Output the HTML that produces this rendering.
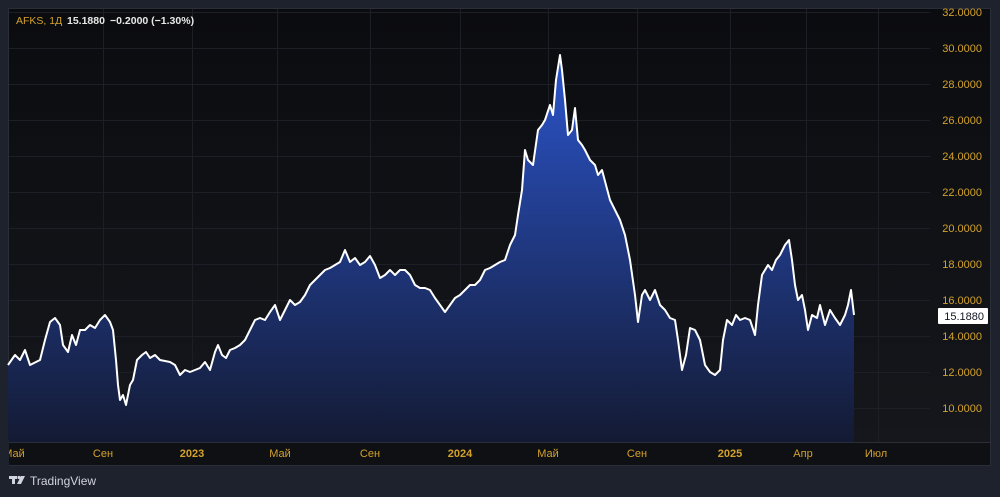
<!DOCTYPE html>
<html><head><meta charset="utf-8"><style>
html,body{margin:0;padding:0;width:1000px;height:497px;background:#1e222d;overflow:hidden;font-family:"Liberation Sans",sans-serif;}
#p{position:absolute;left:8px;top:8px;width:983px;height:458px;background:#0f1013;border:1px solid #2a2e39;box-sizing:border-box;}
svg{position:absolute;left:0;top:0}
.t{font-size:11px;fill:#d4a22b}
</style></head><body>
<div id="p"></div>
<svg width="1000" height="497">
<defs>
<linearGradient id="g" x1="0" y1="0" x2="0" y2="1"><stop offset="0" stop-color="#2c55cc"/><stop offset="1" stop-color="#131a33"/></linearGradient>
<linearGradient id="bg" x1="0" y1="0" x2="0" y2="1"><stop offset="0" stop-color="#0b0c0f"/><stop offset="1" stop-color="#15171c"/></linearGradient>
</defs>
<rect x="9" y="9" width="981" height="433" fill="url(#bg)"/>
<g stroke="#1c1f26" stroke-width="1">
<line x1="9" x2="930" y1="12.5" y2="12.5"/><line x1="9" x2="930" y1="48.5" y2="48.5"/><line x1="9" x2="930" y1="84.5" y2="84.5"/><line x1="9" x2="930" y1="120.5" y2="120.5"/><line x1="9" x2="930" y1="156.5" y2="156.5"/><line x1="9" x2="930" y1="192.5" y2="192.5"/><line x1="9" x2="930" y1="228.5" y2="228.5"/><line x1="9" x2="930" y1="264.5" y2="264.5"/><line x1="9" x2="930" y1="300.5" y2="300.5"/><line x1="9" x2="930" y1="336.5" y2="336.5"/><line x1="9" x2="930" y1="372.5" y2="372.5"/><line x1="9" x2="930" y1="408.5" y2="408.5"/>
<line y1="9" y2="442" x1="103.5" x2="103.5"/><line y1="9" y2="442" x1="192.5" x2="192.5"/><line y1="9" y2="442" x1="277.5" x2="277.5"/><line y1="9" y2="442" x1="370.5" x2="370.5"/><line y1="9" y2="442" x1="460.5" x2="460.5"/><line y1="9" y2="442" x1="548.5" x2="548.5"/><line y1="9" y2="442" x1="637.5" x2="637.5"/><line y1="9" y2="442" x1="730.5" x2="730.5"/><line y1="9" y2="442" x1="806.5" x2="806.5"/><line y1="9" y2="442" x1="878.5" x2="878.5"/>
</g>
<line x1="9" x2="990" y1="442.5" y2="442.5" stroke="#2a2e39"/>
<polygon fill="url(#g)" points="8,442 8,365 15,355 20,360 25,350 30,365 40,360 45,340 50,322 55,318 60,325 63,345 68,352 72,335 76,345 80,330 85,330 90,325 95,328 100,320 105,315 110,322 113,330 116,360 118,385 120,400 123,395 126,405 130,385 133,380 137,360 142,355 146,352 150,358 155,355 160,360 170,362 175,365 180,375 185,370 190,372 195,370 200,368 205,362 210,370 215,352 218,345 222,355 226,358 230,350 235,348 240,345 245,340 250,330 255,320 260,318 265,320 270,312 275,305 280,320 285,310 290,300 295,305 300,302 305,295 310,285 315,280 320,275 325,270 330,268 335,265 340,262 345,250 350,262 355,258 360,265 365,262 370,256 375,265 380,278 385,275 390,270 395,275 400,270 405,270 410,275 415,285 420,288 425,288 430,290 435,298 440,305 445,312 450,305 455,298 460,295 465,290 470,285 475,285 480,280 485,270 490,268 495,265 500,262 505,260 510,245 515,235 518,215 522,190 525,150 528,160 533,165 538,130 542,125 545,120 550,105 553,115 556,80 560,55 562,70 565,100 568,135 572,130 575,108 578,140 582,145 585,150 590,160 595,165 598,175 602,170 606,185 610,200 615,210 620,220 625,235 630,260 635,295 638,322 642,295 645,290 650,300 655,290 660,305 665,310 670,318 675,320 678,340 682,370 686,355 690,328 695,330 700,340 705,365 710,372 715,375 720,370 723,340 727,320 732,325 736,315 740,320 745,318 750,320 755,335 758,305 762,275 765,270 768,265 772,270 776,260 780,255 785,245 789,240 792,260 795,285 798,300 802,295 805,310 808,330 812,315 817,318 820,305 825,325 830,310 835,318 840,325 845,315 848,305 851,290 854,315 854,442"/>
<polyline fill="none" stroke="#fff" stroke-width="2" stroke-linejoin="round" points="8,365 15,355 20,360 25,350 30,365 40,360 45,340 50,322 55,318 60,325 63,345 68,352 72,335 76,345 80,330 85,330 90,325 95,328 100,320 105,315 110,322 113,330 116,360 118,385 120,400 123,395 126,405 130,385 133,380 137,360 142,355 146,352 150,358 155,355 160,360 170,362 175,365 180,375 185,370 190,372 195,370 200,368 205,362 210,370 215,352 218,345 222,355 226,358 230,350 235,348 240,345 245,340 250,330 255,320 260,318 265,320 270,312 275,305 280,320 285,310 290,300 295,305 300,302 305,295 310,285 315,280 320,275 325,270 330,268 335,265 340,262 345,250 350,262 355,258 360,265 365,262 370,256 375,265 380,278 385,275 390,270 395,275 400,270 405,270 410,275 415,285 420,288 425,288 430,290 435,298 440,305 445,312 450,305 455,298 460,295 465,290 470,285 475,285 480,280 485,270 490,268 495,265 500,262 505,260 510,245 515,235 518,215 522,190 525,150 528,160 533,165 538,130 542,125 545,120 550,105 553,115 556,80 560,55 562,70 565,100 568,135 572,130 575,108 578,140 582,145 585,150 590,160 595,165 598,175 602,170 606,185 610,200 615,210 620,220 625,235 630,260 635,295 638,322 642,295 645,290 650,300 655,290 660,305 665,310 670,318 675,320 678,340 682,370 686,355 690,328 695,330 700,340 705,365 710,372 715,375 720,370 723,340 727,320 732,325 736,315 740,320 745,318 750,320 755,335 758,305 762,275 765,270 768,265 772,270 776,260 780,255 785,245 789,240 792,260 795,285 798,300 802,295 805,310 808,330 812,315 817,318 820,305 825,325 830,310 835,318 840,325 845,315 848,305 851,290 854,315"/>
<g class="t" text-anchor="end">
<text x="982" y="16" class="t">32.0000</text><text x="982" y="52" class="t">30.0000</text><text x="982" y="88" class="t">28.0000</text><text x="982" y="124" class="t">26.0000</text><text x="982" y="160" class="t">24.0000</text><text x="982" y="196" class="t">22.0000</text><text x="982" y="232" class="t">20.0000</text><text x="982" y="268" class="t">18.0000</text><text x="982" y="304" class="t">16.0000</text><text x="982" y="340" class="t">14.0000</text><text x="982" y="376" class="t">12.0000</text><text x="982" y="412" class="t">10.0000</text>
</g>
<rect x="938" y="308" width="50" height="16" fill="#fff" rx="1"/>
<text x="984" y="320" text-anchor="end" font-size="11" fill="#131722">15.1880</text>
<g class="t" text-anchor="middle">
<text x="14" y="457" class="t">Май</text><text x="103" y="457" class="t">Сен</text><text x="192" y="457" class="t" font-weight="bold">2023</text><text x="280" y="457" class="t">Май</text><text x="370" y="457" class="t">Сен</text><text x="460" y="457" class="t" font-weight="bold">2024</text><text x="548" y="457" class="t">Май</text><text x="637" y="457" class="t">Сен</text><text x="730" y="457" class="t" font-weight="bold">2025</text><text x="803" y="457" class="t">Апр</text><text x="876" y="457" class="t">Июл</text>
</g>
<rect x="0" y="440" width="9" height="30" fill="#1e222d"/>
<text x="16" y="24" font-size="10.5" fill="#d4a22b">AFKS, 1Д</text>
<text x="67" y="24" font-size="10.5" fill="#e8e8e8" font-weight="bold">15.1880</text>
<text x="110" y="24" font-size="10.5" fill="#e8e8e8" font-weight="bold">−0.2000 (−1.30%)</text>
<g fill="#d1d4dc"><rect x="9" y="476" width="8" height="3"/><rect x="12" y="476" width="3" height="8"/><circle cx="19" cy="477.5" r="1.6"/><polygon points="21,476 25,476 21,484 17,484"/></g>
<text x="30" y="485" font-size="12" fill="#d1d4dc">TradingView</text>
</svg>
</body></html>
